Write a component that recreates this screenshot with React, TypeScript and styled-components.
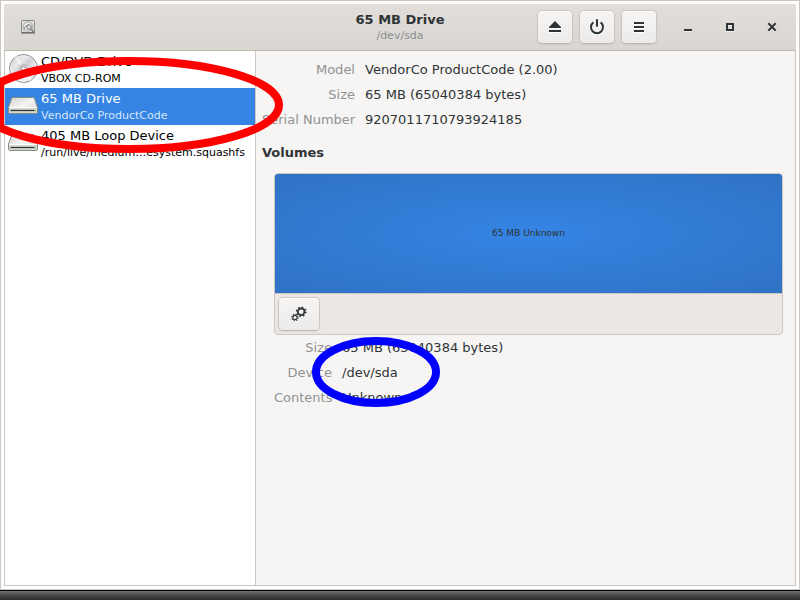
import React from 'react';
import styled, { createGlobalStyle } from 'styled-components';

const Global = createGlobalStyle`
  * { box-sizing: border-box; }
  html, body, #root { height: 100%; margin: 0; }
  body { font: 13px/17px "DejaVu Sans", sans-serif; color: #2e3436; overflow: hidden; }
  button { font: inherit; color: inherit; }
  h1, h2, p, dl, dd, ul { margin: 0; padding: 0; }
`;

const Desktop = styled.div`
  position: relative;
  height: 100vh;
  display: flex;
  flex-direction: column;
`;

const Frame = styled.div`
  flex: 1;
  min-height: 0;
  display: flex;
  border: 1px solid #cdc7c2;
  border-bottom-color: #d5d0cc;
  background: #fff;
  padding: 3px;
`;

const Window = styled.main`
  flex: 1;
  min-width: 0;
  display: flex;
  flex-direction: column;
`;

const Panel = styled.div`
  height: 10px;
  border-top: 1px solid #000;
  background: linear-gradient(#747674, #565656 30%, #2c2a2c);
`;

const Header = styled.header`
  height: 47px;
  display: grid;
  grid-template-columns: 1fr auto 1fr;
  align-items: center;
  padding: 0 6px;
  border-bottom: 1px solid #bfb8b1;
  background: linear-gradient(#e1dedb, #dad6d2);
`;

const AppIcon = styled.span`
  display: flex;
  padding-left: 10px;
`;

const Titles = styled.div`
  text-align: center;
`;

const Title = styled.h1`
  font-size: 13px;
  line-height: 17px;
`;

const Subtitle = styled.p`
  font-size: 11px;
  line-height: 15px;
  color: #8b8e8f;
`;

const HeaderActions = styled.div`
  display: flex;
  justify-content: flex-end;
  gap: 6px;
`;

const WindowControls = styled.div`
  display: flex;
  gap: 6px;
  margin-left: 7px;
`;

const RaisedButton = styled.button<{ $wide?: boolean }>`
  width: ${p => (p.$wide ? 42 : 36)}px;
  height: 34px;
  display: grid;
  place-items: center;
  padding: 0;
  border: 1px solid #cdc7c2;
  border-bottom-color: #bfb8b1;
  border-radius: 5px;
  background: linear-gradient(#f6f5f4, #edebe9);
  box-shadow: inset 0 1px #fff, 0 1px 2px rgba(0, 0, 0, 0.07);
  svg { filter: drop-shadow(0 1px #fff); }
`;

const FlatButton = styled.button`
  width: 36px;
  height: 34px;
  display: grid;
  place-items: center;
  padding: 0;
  border: 0;
  background: none;
  svg { filter: drop-shadow(0 1px #f3f1ef); }
`;

const Body = styled.div`
  flex: 1;
  min-height: 0;
  display: flex;
  border: 1px solid #cac5c0;
  border-top: 0;
`;

const DeviceList = styled.ul`
  width: 251px;
  flex: none;
  list-style: none;
  border-right: 1px solid #cdc7c2;
  background: #fff;
`;

const Device = styled.button<{ $selected?: boolean }>`
  width: 100%;
  height: 37px;
  display: flex;
  align-items: flex-start;
  gap: 1px;
  padding: 0 1px;
  border: 0;
  text-align: left;
  white-space: nowrap;
  background: ${p => (p.$selected ? '#3584e4' : 'none')};
  color: ${p => (p.$selected ? '#fff' : '#000')};
  small { color: ${p => (p.$selected ? '#d7e6fa' : '#000')}; }
`;

const DeviceText = styled.span`
  display: flex;
  flex-direction: column;
  padding-top: 2px;
`;

const DeviceName = styled.span`
  font-size: 13px;
  line-height: 18px;
`;

const DeviceDetail = styled.small`
  font-size: 11px;
  line-height: 15px;
`;

const Details = styled.section`
  flex: 1;
  min-width: 0;
  padding: 6px 12px 6px 6px;
  background: #f6f5f4;
`;

const Facts = styled.dl<{ $inset?: boolean }>`
  display: grid;
  grid-template-columns: ${p => (p.$inset ? 58 : 93)}px 1fr;
  column-gap: 10px;
  margin-left: ${p => (p.$inset ? 12 : 0)}px;
  line-height: 25px;
  white-space: nowrap;
`;

const Label = styled.dt`
  text-align: right;
  color: #8f9293;
`;

const Heading = styled.h2`
  margin: 12px 0;
  font-size: 13px;
  line-height: 17px;
`;

const VolumeBox = styled.div`
  margin-left: 12px;
  border: 1px solid #cdc7c2;
  border-radius: 4px;
  overflow: hidden;
  background: #ebe7e4;
`;

const Volume = styled.div`
  height: 119px;
  display: grid;
  place-items: center;
  font-size: 9px;
  background: radial-gradient(ellipse farthest-corner, #3584e4, #2f72c4);
`;

const Toolbar = styled.div`
  padding: 3px;
  border-top: 1px solid #cdc7c2;
`;

const Rings = styled.svg`
  position: absolute;
  inset: 0;
  width: 100%;
  height: 100%;
  pointer-events: none;
  fill: none;
  stroke-width: 8px;
`;

const DiscIcon = () => (
  <svg width="34" height="34" viewBox="0 0 34 34" aria-hidden="true">
    <defs>
      <linearGradient id="disc" x1="0" y1="0" x2="1" y2="1">
        <stop offset="0" stopColor="#b4b4b4" /><stop offset=".3" stopColor="#e9e9eb" />
        <stop offset=".5" stopColor="#cfcdd8" /><stop offset=".72" stopColor="#f4f4f4" />
        <stop offset="1" stopColor="#b5b5b5" />
      </linearGradient>
    </defs>
    <circle cx="17.500" cy="17.500" r="14" fill="url(#disc)" stroke="#8c8c8c" />
    <circle cx="17.500" cy="17.500" r="12.900" fill="none" stroke="#fff" strokeOpacity=".5" />
    <path d="M17.500 17.500 8 7l4-3ZM17.500 17.500l9.500 10-4 3Z" fill="#fff" opacity=".45" />
    <circle cx="17.500" cy="17.500" r="4" fill="#d0cfd6" stroke="#bbb" />
    <circle cx="17.500" cy="17.500" r="2" fill="#fff" stroke="#999" />
  </svg>
);

const DriveIcon = () => (
  <svg width="34" height="34" viewBox="0 0 34 34" aria-hidden="true">
    <defs>
      <linearGradient id="top" x1="0" y1="0" x2="1" y2="1">
        <stop offset="0" stopColor="#d2d2d0" /><stop offset=".5" stopColor="#f4f4f3" />
        <stop offset="1" stopColor="#d0d0ce" />
      </linearGradient>
    </defs>
    <path d="M7 9.500h20q1 0 1.400 1L31.500 19v5q0 1.500-1.500 1.500H4Q2.500 25.500 2.500 24v-5l3.100-8.500q.4-1 1.400-1Z" fill="url(#top)" stroke="#888a85" />
    <path d="M3 19.500h28v4.500q0 1-1 1H4q-1 0-1-1Z" fill="#d3d7cf" />
    <path d="M3 19.500h28" stroke="#fff" />
    <path d="M4.500 22.500h24" stroke="#2e3436" strokeWidth="1.200" />
    <path d="M29.500 21.500v2" stroke="#8fce5a" />
  </svg>
);

const DisksIcon = () => (
  <svg width="16" height="16" viewBox="0 0 16 16" aria-hidden="true">
    <rect x="1.500" y="1.500" width="13" height="12" rx="1" fill="#dcdcd9" stroke="#888a85" />
    <path d="M1 14h14" stroke="#555753" />
    <circle cx="8" cy="7.500" r="4.500" fill="#eee" stroke="#a5a7a3" />
    <path d="M4 11c0-3 2-5 5-5" stroke="#8a8a8a" fill="none" />
    <circle cx="9" cy="8" r="2.300" fill="#d9e0e4" stroke="#777" />
    <path d="m11 10 3.500 4" stroke="#777" strokeWidth="1.500" />
  </svg>
);

const EjectIcon = () => (
  <svg width="16" height="16" viewBox="0 0 16 16" fill="#2e3436" aria-hidden="true">
    <path d="M2 9V8l6-6 6 6v1ZM2 11h12v2H2Z" />
  </svg>
);

const PowerIcon = () => (
  <svg width="16" height="16" viewBox="0 0 16 16" fill="none" stroke="#2e3436" strokeWidth="2" aria-hidden="true">
    <path d="M4.400 3.400a6 6 0 1 0 7.200 0" /><path d="M8 1v6" strokeLinecap="round" />
  </svg>
);

const MenuIcon = () => (
  <svg width="16" height="16" viewBox="0 0 16 16" fill="#2e3436" aria-hidden="true">
    <path d="M3 3h10v2H3ZM3 7h10v2H3ZM3 11h10v2H3Z" />
  </svg>
);

const MinimizeIcon = () => (
  <svg width="16" height="16" viewBox="0 0 16 16" fill="#2e3436" aria-hidden="true"><path d="M4 10h8v2H4Z" /></svg>
);

const MaximizeIcon = () => (
  <svg width="16" height="16" viewBox="0 0 16 16" fill="none" stroke="#2e3436" strokeWidth="2" aria-hidden="true">
    <path d="M5 5h6v6H5Z" />
  </svg>
);

const CloseIcon = () => (
  <svg width="16" height="16" viewBox="0 0 16 16" stroke="#2e3436" strokeWidth="2" aria-hidden="true">
    <path d="m4.300 4.300 7.400 7.400M11.700 4.300l-7.400 7.400" />
  </svg>
);

const GearsIcon = () => (
  <svg width="16" height="16" viewBox="0 0 16 16" fill="none" stroke="#2e3436" aria-hidden="true">
    <circle cx="10.200" cy="5.800" r="3.300" strokeWidth="1.800" />
    <circle cx="10.200" cy="5.800" r="4.600" strokeWidth="1.600" strokeDasharray="1.600 2.010" />
    <circle cx="4" cy="11.500" r="2.200" strokeWidth="1.200" />
    <circle cx="4" cy="11.500" r="3.200" strokeWidth="1.200" strokeDasharray="1.200 1.310" />
  </svg>
);

const devices = [
  { name: 'CD/DVD Drive', detail: 'VBOX CD-ROM', icon: <DiscIcon /> },
  { name: '65 MB Drive', detail: 'VendorCo ProductCode', icon: <DriveIcon />, selected: true },
  { name: '405 MB Loop Device', detail: '/run/live/medium…esystem.squashfs', icon: <DriveIcon /> },
];

export default function App() {
  return (
    <Desktop>
      <Global />
      <Frame>
        <Window>
          <Header>
            <AppIcon><DisksIcon /></AppIcon>
            <Titles>
              <Title>65 MB Drive</Title>
              <Subtitle>/dev/sda</Subtitle>
            </Titles>
            <HeaderActions>
              <RaisedButton aria-label="Eject"><EjectIcon /></RaisedButton>
              <RaisedButton aria-label="Power off"><PowerIcon /></RaisedButton>
              <RaisedButton aria-label="Menu"><MenuIcon /></RaisedButton>
              <WindowControls>
                <FlatButton aria-label="Minimize"><MinimizeIcon /></FlatButton>
                <FlatButton aria-label="Maximize"><MaximizeIcon /></FlatButton>
                <FlatButton aria-label="Close"><CloseIcon /></FlatButton>
              </WindowControls>
            </HeaderActions>
          </Header>
          <Body>
            <DeviceList>
              {devices.map(d => (
                <li key={d.name}>
                  <Device $selected={d.selected}>
                    {d.icon}
                    <DeviceText>
                      <DeviceName>{d.name}</DeviceName>
                      <DeviceDetail>{d.detail}</DeviceDetail>
                    </DeviceText>
                  </Device>
                </li>
              ))}
            </DeviceList>
            <Details>
              <Facts>
                <Label>Model</Label><dd>VendorCo ProductCode (2.00)</dd>
                <Label>Size</Label><dd>65 MB (65040384 bytes)</dd>
                <Label>Serial Number</Label><dd>9207011710793924185</dd>
              </Facts>
              <Heading>Volumes</Heading>
              <VolumeBox>
                <Volume>65 MB Unknown</Volume>
                <Toolbar>
                  <RaisedButton $wide aria-label="Volume options"><GearsIcon /></RaisedButton>
                </Toolbar>
              </VolumeBox>
              <Facts $inset>
                <Label>Size</Label><dd>65 MB (65040384 bytes)</dd>
                <Label>Device</Label><dd>/dev/sda</dd>
                <Label>Contents</Label><dd>Unknown</dd>
              </Facts>
            </Details>
          </Body>
        </Window>
      </Frame>
      <Panel />
      <Rings aria-hidden="true">
        <ellipse cx="129" cy="105" rx="150" ry="44" stroke="#f00" />
        <path d="M0 80V130" stroke="#f00" />
        <ellipse cx="376" cy="372" rx="60" ry="31" stroke="#00f" />
      </Rings>
    </Desktop>
  );
}
